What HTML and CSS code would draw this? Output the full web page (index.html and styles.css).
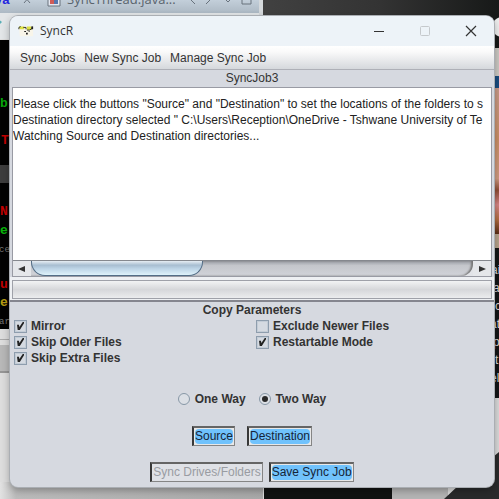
FILE: index.html
```html
<!DOCTYPE html>
<html lang="en">
<head>
<meta charset="utf-8">
<title>SyncR</title>
<link rel="stylesheet" href="styles.css">
</head>
<body>
<div class="desktop">
  <svg class="backdrop" viewBox="0 0 499 499" preserveAspectRatio="none" aria-hidden="true">
    <defs>
      <linearGradient id="tabs" x1="0" y1="0" x2="0" y2="1"><stop offset="0" stop-color="#c3cfda"/><stop offset="1" stop-color="#adb9c4"/></linearGradient>
      <linearGradient id="dark" x1="0" y1="0" x2="1" y2="0"><stop offset="0" stop-color="#414141"/><stop offset=".5" stop-color="#333"/><stop offset="1" stop-color="#171918"/></linearGradient>
      <linearGradient id="floor" x1="0" y1="0" x2="1" y2="0"><stop offset="0" stop-color="#e2e2e2"/><stop offset=".06" stop-color="#bcbcbc"/><stop offset="1" stop-color="#a9a9a9"/></linearGradient>
      <linearGradient id="face" x1="0" y1="0" x2="0" y2="1"><stop offset="0" stop-color="#c89a88"/><stop offset=".35" stop-color="#c98e66"/><stop offset=".62" stop-color="#cf9a80"/><stop offset=".7" stop-color="#8f4d35"/><stop offset=".8" stop-color="#d58484"/><stop offset=".9" stop-color="#b26d42"/><stop offset="1" stop-color="#5a2d18"/></linearGradient>
    </defs>
    <rect width="499" height="499" fill="#dedede"/>
    <rect width="259" height="13" fill="url(#tabs)"/>
    <rect y="13" width="259" height="26" fill="#e3e6e8"/>
    <rect x="259" width="5" height="20" fill="#d5d9dc"/>
    <rect x="263" width="236" height="48" fill="url(#dark)"/>
    <path d="M24-4l6 7M30-4l-6 7" stroke="#68727c" fill="none"/>
    <path d="M48-3h12v9H48z" fill="#e4e7f0" stroke="#68727c"/><path d="M50 0h4v4h-4z" fill="#d15b57"/><path d="M54-1h4v5h-4z" fill="#5576ae"/>
    <path d="M195-4l-4 4 4 4M206-4l4 4-4 4M225-1l3 3 3-3M242-4h9v8h-9z" stroke="#68727c" fill="none"/>
    <path d="M-2 19l4 3-4 4z" fill="#58aeb5"/>
    <text class="tab-text" x="67" y="4">SyncThread.java...</text>
    <text class="code-tab" x="-5" y="4">va</text>
    <rect y="40" width="12" height="289" fill="#020202"/>
    <rect y="165" width="12" height="18" fill="#3d3d3d"/>
    <g class="code"><text x="0" y="107" fill="#08a80a">b</text><text x="1" y="144" fill="#c40000">T</text><text x="0" y="215" fill="#c40000">N</text><text x="0" y="234" fill="#08b40a">e</text><text x="0" y="288" fill="#c40000">u</text><text x="0" y="306" fill="#b69b11">e</text></g>
    <text class="small-code" x="-1" y="252">ce</text><text class="small-code" x="-1" y="324">ar</text>
    <rect y="329" width="12" height="16" fill="#ddd"/><rect y="339" width="12" height="1" fill="#aaa"/>
    <rect y="345" width="12" height="28" fill="#b8b8b8"/><rect y="371" width="12" height="2" fill="#969696"/>
    <rect y="373" width="12" height="126" fill="#ddd"/>
    <rect x="0" y="482" width="263" height="17" fill="url(#floor)"/>
    <rect x="264" y="480" width="128" height="19" fill="#111312"/><rect x="392" y="480" width="56" height="19" fill="#b5b5b5"/>
    <rect x="493" y="48" width="6" height="34" fill="#cbc8c2"/><circle cx="502" cy="27" r="10" fill="#eee"/>
    <path d="M493 76h6v14h-6z" fill="#194b7e"/><rect x="493" y="88" width="6" height="146" fill="url(#face)"/>
    <rect x="493" y="234" width="6" height="14" fill="#b5a18a"/><rect x="493" y="248" width="6" height="150" fill="#141617"/>
    <g class="page-text"><text x="491" y="274">ai</text><text x="493" y="292">a</text><text x="495" y="310">c</text><text x="490" y="328">at</text><text x="493" y="346">p</text><text x="495" y="364">t</text><text x="490" y="382">el</text></g>
    <rect x="493" y="398" width="6" height="60" fill="#dadada"/><path d="M444 499l15-14 40-33v47z" fill="#292a2b"/>
  </svg>

  <main class="window">
    <header class="titlebar">
      <svg class="logo" viewBox="0 0 18 12" aria-hidden="true"><path d="M1 1h16v11H2z" fill="#f8f5e9"/><path d="M1 1h6v3H4L2 4z" fill="#dce044"/><path d="M10 1h5v4h-5z" fill="#dce044"/><path d="M1 4V2l2-1M6 2h3v2M10 5h3l3-2V1" stroke="#242820" fill="none"/><path d="M15 1h2v3h-2zM7 6h2v1H7zM9 8h2v2H9zM12 6h1v1h-1z" fill="#222"/></svg>
      <h1 class="title">SyncR</h1>
      <div class="controls">
        <button class="control" aria-label="Minimize"><svg viewBox="0 0 12 12"><path d="M1 6.5h10" stroke="#333"/></svg></button>
        <button class="control" aria-label="Maximize" disabled><svg viewBox="0 0 12 12"><rect x="1.500" y="1.500" width="9" height="9" rx="1" stroke="#c5c9cc" fill="none"/></svg></button>
        <button class="control" aria-label="Close"><svg viewBox="0 0 12 12"><path d="M1 1l10 10M11 1L1 11" stroke="#333" stroke-width="1.200"/></svg></button>
      </div>
    </header>
    <nav class="menubar"><button>Sync Jobs</button><button>New Sync Job</button><button>Manage Sync Job</button></nav>
    <h2 class="job">SyncJob3</h2>
    <section class="log">
      <div class="log-text" role="log"><p>Please click the buttons "Source" and "Destination" to set the locations of the folders to s</p><p>Destination directory selected " C:\Users\Reception\OneDrive - Tshwane University of Te</p><p>Watching Source and Destination directories...</p></div>
      <div class="scrollbar">
        <button class="arrow" aria-label="Scroll left"><svg viewBox="0 0 8 8"><path d="M7 1v6L0 4z" fill="#333"/></svg></button>
        <div class="track"><div class="thumb"></div></div>
        <button class="arrow" aria-label="Scroll right"><svg viewBox="0 0 8 8"><path d="M1 1v6l7-3z" fill="#333"/></svg></button>
      </div>
    </section>
    <div class="status"><div class="status-bar"></div></div>
    <form class="parameters">
      <h3>Copy Parameters</h3>
      <div class="options">
        <label><input type="checkbox" checked>Mirror</label>
        <label><input type="checkbox">Exclude Newer Files</label>
        <label><input type="checkbox" checked>Skip Older Files</label>
        <label><input type="checkbox" checked>Restartable Mode</label>
        <label><input type="checkbox" checked>Skip Extra Files</label>
      </div>
      <div class="directions">
        <label><input type="radio" name="direction">One Way</label>
        <label><input type="radio" name="direction" checked>Two Way</label>
      </div>
      <div class="actions folders"><button type="button"><span>Source</span></button><button type="button"><span>Destination</span></button></div>
      <div class="actions jobs"><button type="button" disabled><span>Sync Drives/Folders</span></button><button type="button"><span>Save Sync Job</span></button></div>
    </form>
  </main>
</div>
</body>
</html>
```
FILE: styles.css
```css
* { box-sizing: border-box; }
body { margin: 0; color: #333; font: 12px/16px "Liberation Sans", Arial, sans-serif; }
h1, h2, h3, p { margin: 0; font: inherit; }
button { margin: 0; padding: 0; border: 0; background: none; color: inherit; font: inherit; }
.desktop { position: relative; display: flex; min-height: 100vh; padding: 16px 5px 12px 10px; overflow: hidden; }
.backdrop { position: absolute; inset: 0; width: 100%; height: 100%; }
.tab-text { font: 13px "Open Sans", sans-serif; fill: #59636c; }
.code-tab { font: bold 13px "Liberation Sans", sans-serif; fill: #2424df; }
.code { font: bold 13px "Liberation Mono", monospace; }
.small-code { font: 9px "Liberation Mono", monospace; fill: #777; }
.page-text { font: 12px "Liberation Sans", sans-serif; fill: #ddd; }
.window { position: relative; display: flex; flex: 1; flex-direction: column; min-width: 0; overflow: hidden; border-radius: 8px; background: #d6d9e0; box-shadow: 0 0 0 1px #aaaeb3, 0 3px 8px #0005; }
.titlebar { display: flex; align-items: center; height: 30px; padding-left: 8px; background: #edf3f8; }
.logo { width: 16px; height: 12px; }
.title { margin-left: 6px; font: 12px/16px "Open Sans", sans-serif; }
.controls { display: flex; margin-left: auto; }
.control { display: grid; place-items: center; width: 46px; height: 30px; }
.control svg { width: 12px; height: 12px; }
.menubar { display: flex; gap: 9px; height: 24px; padding: 0 10px; border-bottom: 1px solid #aeb0b7; background: linear-gradient(#fff, #fafafa 25%, #d5d8dc); }
.job { height: 17px; text-align: center; }
.log { display: flex; flex-direction: column; height: 190px; margin: 0 2px; border: 1px solid #999ba4; background: #fff; color: #222; }
.log-text { flex: 1; overflow: hidden; padding-top: 8px; white-space: nowrap; }
.scrollbar { display: flex; height: 16px; border-top: 1px solid #85888e; background: #e2e4e8; }
.arrow { display: grid; place-items: center; width: 18px; background: #e5e7ea; }
.arrow svg { width: 8px; height: 8px; }
.track { flex: 1; overflow: hidden; border-radius: 0 0 12px 0; background: linear-gradient(#9a9da4, #c4c6cb 30%, #d1d3d9); box-shadow: inset -2px 0 2px #777; }
.thumb { width: 39%; height: 15px; border: 1px solid #536d86; border-top: 0; border-radius: 0 0 14px 14px; background: linear-gradient(#e6edf3, #a8bed1 30%, #bdd4e6 55%, #def2fa); }
.status { height: 25px; padding: 3px 2px 1px; border-bottom: 2px solid #85868f; background: #eef0f3; }
.status-bar { height: 100%; border: 1px solid #9fa1a9; background: linear-gradient(#f2f3f4, #d6d7da 50%, #ebecee); }
.parameters { font-weight: bold; }
h3 { text-align: center; }
.options { display: grid; grid-template-columns: 1fr 1fr; column-gap: 4px; padding-left: 4px; }
label { display: flex; align-items: center; gap: 4px; }
.options input { display: grid; place-items: center; width: 13px; height: 13px; margin: 0; appearance: none; border: 1px solid #8e9dad; background: #d5dae1; box-shadow: inset 0 0 0 1px #c3ccd6; }
.options input:checked::after { content: ""; width: 7px; height: 8px; background: #222; clip-path: polygon(0 35%, 28% 35%, 34% 62%, 82% 0, 100% 0, 100% 15%, 40% 100%, 10% 100%); }
.directions { display: flex; justify-content: center; gap: 13px; margin-top: 25px; }
.directions label { gap: 5px; }
.directions input { display: grid; place-items: center; width: 12px; height: 12px; margin: 0; appearance: none; border: 1px solid #8797a6; border-radius: 50%; background: #dbdfe5; }
.directions input:checked::after { content: ""; width: 6px; height: 6px; border-radius: 50%; background: #292929; }
.actions { display: flex; justify-content: center; font-weight: normal; }
.actions button { height: 20px; padding: 1px; border: 1px solid #858585; border-top: 2px solid #656565; border-left: 2px solid #383838; background: #e8e8e8; color: #152438; }
.actions span { display: block; border-radius: 4px; background: #70c2fc; line-height: 15px; }
.folders { gap: 12px; margin-top: 19px; }
.jobs { gap: 6px; margin-top: 16px; }
.actions button:disabled { color: #999ca2; background: #dfe1e6; }
.actions button:disabled span { background: none; }
```
